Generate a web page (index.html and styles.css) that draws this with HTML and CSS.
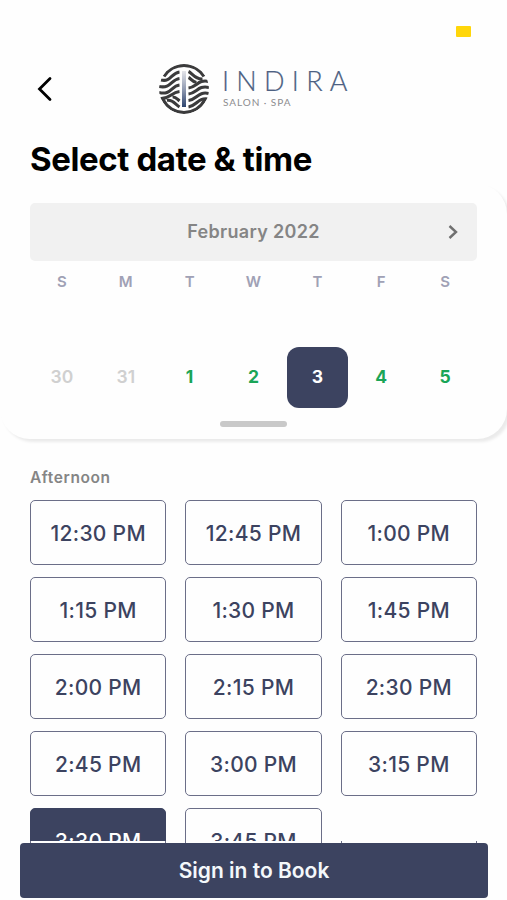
FILE: index.html
```html
<!DOCTYPE html>
<html lang="en">
    <head>
        <meta charset="utf-8">
        <meta name="viewport" content="width=device-width, initial-scale=1">
        <title>Select date &amp; time</title>
        <link rel="stylesheet" href="styles.css">
    </head>
    <body>
        <div class="screen">
            <div class="status"><span class="battery"></span></div>

            <!-- Logo and back button -->
            <header class="header">
                <button class="back" aria-label="Back">
                    <svg width="16" height="26" viewBox="0 0 16 26"><path d="M14 2.500 L3.500 13 L14 23.500"/></svg>
                </button>
                <div class="logo">
                    <svg class="mark" width="50" height="50" viewBox="0 0 50 50">
                        <defs>
                            <linearGradient id="bar" x1="0" y1="0" x2="0" y2="1">
                                <stop offset="0" stop-color="#e4e5ea"/>
                                <stop offset="0.5" stop-color="#929cb3"/>
                                <stop offset="1" stop-color="#2e456f"/>
                            </linearGradient>
                            <clipPath id="disc"><circle cx="25" cy="25" r="25"/></clipPath>
                        </defs>
                        <g class="waves" clip-path="url(#disc)">
                            <path d="M5 12.500 A23.500 23.500 0 0 1 45 12.500"/>
                            <path d="M4 35.500 A23.500 23.500 0 0 0 46 35.500"/>
                            <path d="M2 16 C12 18.500 12 9 20.500 8"/>
                            <path d="M0 22.500 C12 25 12 15.500 20.500 14.500"/>
                            <path d="M0 28.500 C12 31.500 12 22 20.500 21"/>
                            <path d="M1 34.500 C10 35.500 12 28.500 20.500 27.500"/>
                            <path d="M8 36.500 C13 35 16 40 20.500 43"/>
                            <path d="M13.500 33 C16.500 32.500 18 35 20.500 37"/>
                            <path d="M29.500 7.500 C33 9 36 15.500 43.500 15"/>
                            <path d="M29.500 13.500 C32 14.500 33 18 37.500 18.500"/>
                            <path d="M29.500 24 C38 23 39 15 50 17.500"/>
                            <path d="M29.500 30 C38 29 39 21 50 23.500"/>
                            <path d="M29.500 36.500 C38 35.500 39 27 50 29.500"/>
                            <path d="M29.500 43 C38 41.500 39 33.500 49 35"/>
                        </g>
                        <rect x="23" y="7" width="4" height="36" fill="url(#bar)"/>
                    </svg>
                    <div class="wordmark">
                        <div class="name">INDIRA</div>
                        <div class="tagline">SALON · SPA</div>
                    </div>
                </div>
            </header>

            <h1>Select date &amp; time</h1>

            <!-- Calendar, one week -->
            <section class="calendar">
                <div class="month">
                    <span>February 2022</span>
                    <svg class="next" width="10" height="16" viewBox="0 0 10 16"><path d="M1.500 2 L8 8 L1.500 14"/></svg>
                </div>
                <div class="week names">
                    <span>S</span><span>M</span><span>T</span><span>W</span><span>T</span><span>F</span><span>S</span>
                </div>
                <div class="week days">
                    <span class="past">30</span><span class="past">31</span><span>1</span><span>2</span><span class="selected">3</span><span>4</span><span>5</span>
                </div>
                <div class="handle"></div>
            </section>

            <!-- Time slots -->
            <section class="times">
                <h2>Afternoon</h2>
                <div class="slots">
                    <button>12:30 PM</button>
                    <button>12:45 PM</button>
                    <button>1:00 PM</button>
                    <button>1:15 PM</button>
                    <button>1:30 PM</button>
                    <button>1:45 PM</button>
                    <button>2:00 PM</button>
                    <button>2:15 PM</button>
                    <button>2:30 PM</button>
                    <button>2:45 PM</button>
                    <button>3:00 PM</button>
                    <button>3:15 PM</button>
                    <button class="selected">3:30 PM</button>
                    <button>3:45 PM</button>
                </div>
            </section>
            <div class="edges"><span></span><span></span><span></span></div>

            <button class="book">Sign in to Book</button>
        </div>
    </body>
</html>
```
FILE: styles.css
```css
* { box-sizing: border-box; }

body {
    margin: 0;
    background: #fefefe;
    font-family: Inter, "Liberation Sans", sans-serif;
}

button { font-family: inherit; padding: 0; cursor: pointer; }

.screen {
    width: 507px;
    height: 900px;
    overflow: hidden;
    display: flex;
    flex-direction: column;
}

.status {
    height: 64px;
    flex: none;
    display: flex;
    justify-content: flex-end;
    padding: 26px 36px 0 0;
}

.battery {
    width: 15px;
    height: 11px;
    border-radius: 1px;
    background: #ffd60a;
}

.header {
    display: flex;
    height: 50px;
    flex: none;
    padding-left: 36px;
}

.back {
    width: 16px;
    height: 26px;
    margin-top: 12px;
    border: none;
    background: none;
}

.back svg { display: block; }
.back path { fill: none; stroke: #000; stroke-width: 2.8; stroke-linecap: round; }

.logo { display: flex; margin-left: 107px; }
.mark { display: block; }
.waves path { fill: none; stroke: #3b3b3c; stroke-width: 3.1; }

.wordmark { margin-left: 13px; white-space: nowrap; }

.name {
    font: 300 27px/33px Lato, sans-serif;
    letter-spacing: 7.3px;
    color: #4d6182;
    -webkit-text-stroke: 0.2px #4d6182;
}

.tagline {
    margin-left: 1px;
    font: 400 10px/11px Lato, sans-serif;
    letter-spacing: 0.95px;
    color: #8c8c8e;
}

h1 {
    flex: none;
    margin: 25px 0 0 30px;
    height: 45px;
    font-size: 33px;
    line-height: 41px;
    font-weight: 700;
    letter-spacing: -0.4px;
    color: #000;
}

.calendar {
    flex: none;
    height: 255px;
    padding: 19px 30px 0;
    border-radius: 30px;
    background: #fefefe;
    box-shadow: 3px 3px 3px rgba(0, 0, 0, 0.08);
}

.month {
    position: relative;
    display: flex;
    align-items: center;
    justify-content: center;
    height: 58px;
    padding-bottom: 1px;
    border-radius: 5px;
    background: #f1f1f1;
    font-size: 18px;
    font-weight: 600;
    letter-spacing: 0.3px;
    color: #858585;
}

.next { position: absolute; right: 19px; }
.next path { fill: none; stroke: #707070; stroke-width: 2.4; }

.week {
    display: grid;
    grid-template-columns: repeat(7, 1fr);
    text-align: center;
}

.names {
    padding-top: 11px;
    font-size: 15px;
    line-height: 20px;
    font-weight: 600;
    color: #a0a1b5;
}

.days {
    margin-top: 55px;
    font-size: 17.5px;
    line-height: 60px;
    font-weight: 700;
    color: #1aa557;
}

.days .past { font-weight: 600; color: #d0d0d0; }

.days .selected {
    width: 61px;
    height: 61px;
    border-radius: 12px;
    background: #3c4360;
    color: #fff;
    justify-self: center;
}

.handle {
    width: 67px;
    height: 6px;
    margin: 13px auto 0;
    border-radius: 3px;
    background: #c9c9c9;
}

.times {
    flex: none;
    height: 402px;
    overflow: hidden;
    padding: 29px 30px 0;
}

h2 {
    margin: 0 0 12px;
    font-size: 15.5px;
    line-height: 20px;
    font-weight: 600;
    letter-spacing: 0.6px;
    color: #858585;
}

.slots {
    display: grid;
    grid-template-columns: repeat(3, 1fr);
    gap: 12px 19px;
}

.slots button {
    height: 65px;
    padding-top: 1px;
    border: 1.5px solid #6b6e88;
    border-radius: 5px;
    background: #fefefe;
    font-size: 21px;
    font-weight: 500;
    letter-spacing: 0.3px;
    color: #3c4360;
}

.slots .selected {
    border-color: #3c4360;
    background: #3c4360;
    color: #fff;
}

/* sides of the row that runs on under the book button */
.edges {
    flex: none;
    display: grid;
    grid-template-columns: repeat(3, 1fr);
    gap: 19px;
    height: 2px;
    padding: 0 30px;
}

.edges span {
    border: solid #6b6e88;
    border-width: 0 1px;
}

.book {
    flex: none;
    height: 55px;
    margin: 0 19px 0 20px;
    border: none;
    border-radius: 4px;
    background: #3c4360;
    font-size: 21px;
    font-weight: 600;
    color: #f4f8fb;
}
```
